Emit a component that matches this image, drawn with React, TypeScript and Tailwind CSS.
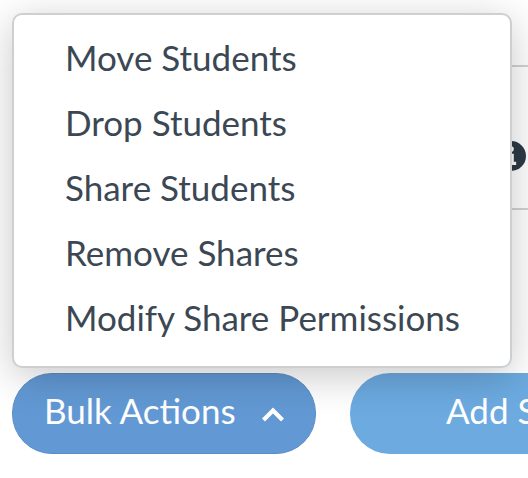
const menuItems = ["Move Students", "Drop Students", "Share Students", "Remove Shares", "Modify Share Permissions"]

function ChevronUp() {
  return (
    <svg width="26" height="16" viewBox="0 0 26 16" fill="none" className="ml-[24px] mt-[6px]">
      <path d="M3.5 14L13 4.500L22.500 14" stroke="white" strokeWidth="4.2" />
    </svg>
  )
}

export default function App() {
  return (
    <div className="relative h-[478px] w-[528px] overflow-hidden bg-white font-['Lato',sans-serif]">
      {/* table behind the menu */}
      <div className="flex h-[373px] flex-col items-end pt-[65px]">
        <div className="flex h-[145px] w-[60px] items-start justify-end border-y-2 border-[#d0d3d6] pt-[74px]">
          <svg width="30" height="30" viewBox="0 0 32 32" className="mr-[2px]">
            <circle cx="16" cy="16" r="16" fill="#2d3b45" />
            <circle cx="16" cy="8.500" r="3" fill="white" />
            <path d="M11 13.500h8V22h2.500v3.500H11V22h2.500v-5H11z" fill="white" />
          </svg>
        </div>
      </div>

      <div className="flex items-start gap-[34px] pl-[12px]">
        <button className="flex h-[81px] w-[304px] shrink-0 items-center rounded-[40px] border border-[#5a8ec6] bg-[#6299d4] pb-[6px] pl-[31px] text-[35px] text-white">
          Bulk Actions
          <ChevronUp />
        </button>
        <button className="h-[81px] w-[300px] shrink-0 rounded-[40px] bg-[#6caae0] pb-[6px] pl-[96px] text-left text-[35px] whitespace-nowrap text-white">
          Add Students
        </button>
      </div>

      {/* open dropdown */}
      <div className="absolute top-[13px] left-[12px] flex h-[355px] w-[500px] flex-col rounded-[10px] border-2 border-[#cdd0d3] bg-white pt-[10px] pl-[51px] shadow-[0_8px_40px_rgba(0,0,0,0.22)]">
        {menuItems.map((item) => (
          <div key={item} className="flex h-[65px] items-center text-[35px] text-[#3b4854]">
            {item}
          </div>
        ))}
      </div>
    </div>
  )
}
